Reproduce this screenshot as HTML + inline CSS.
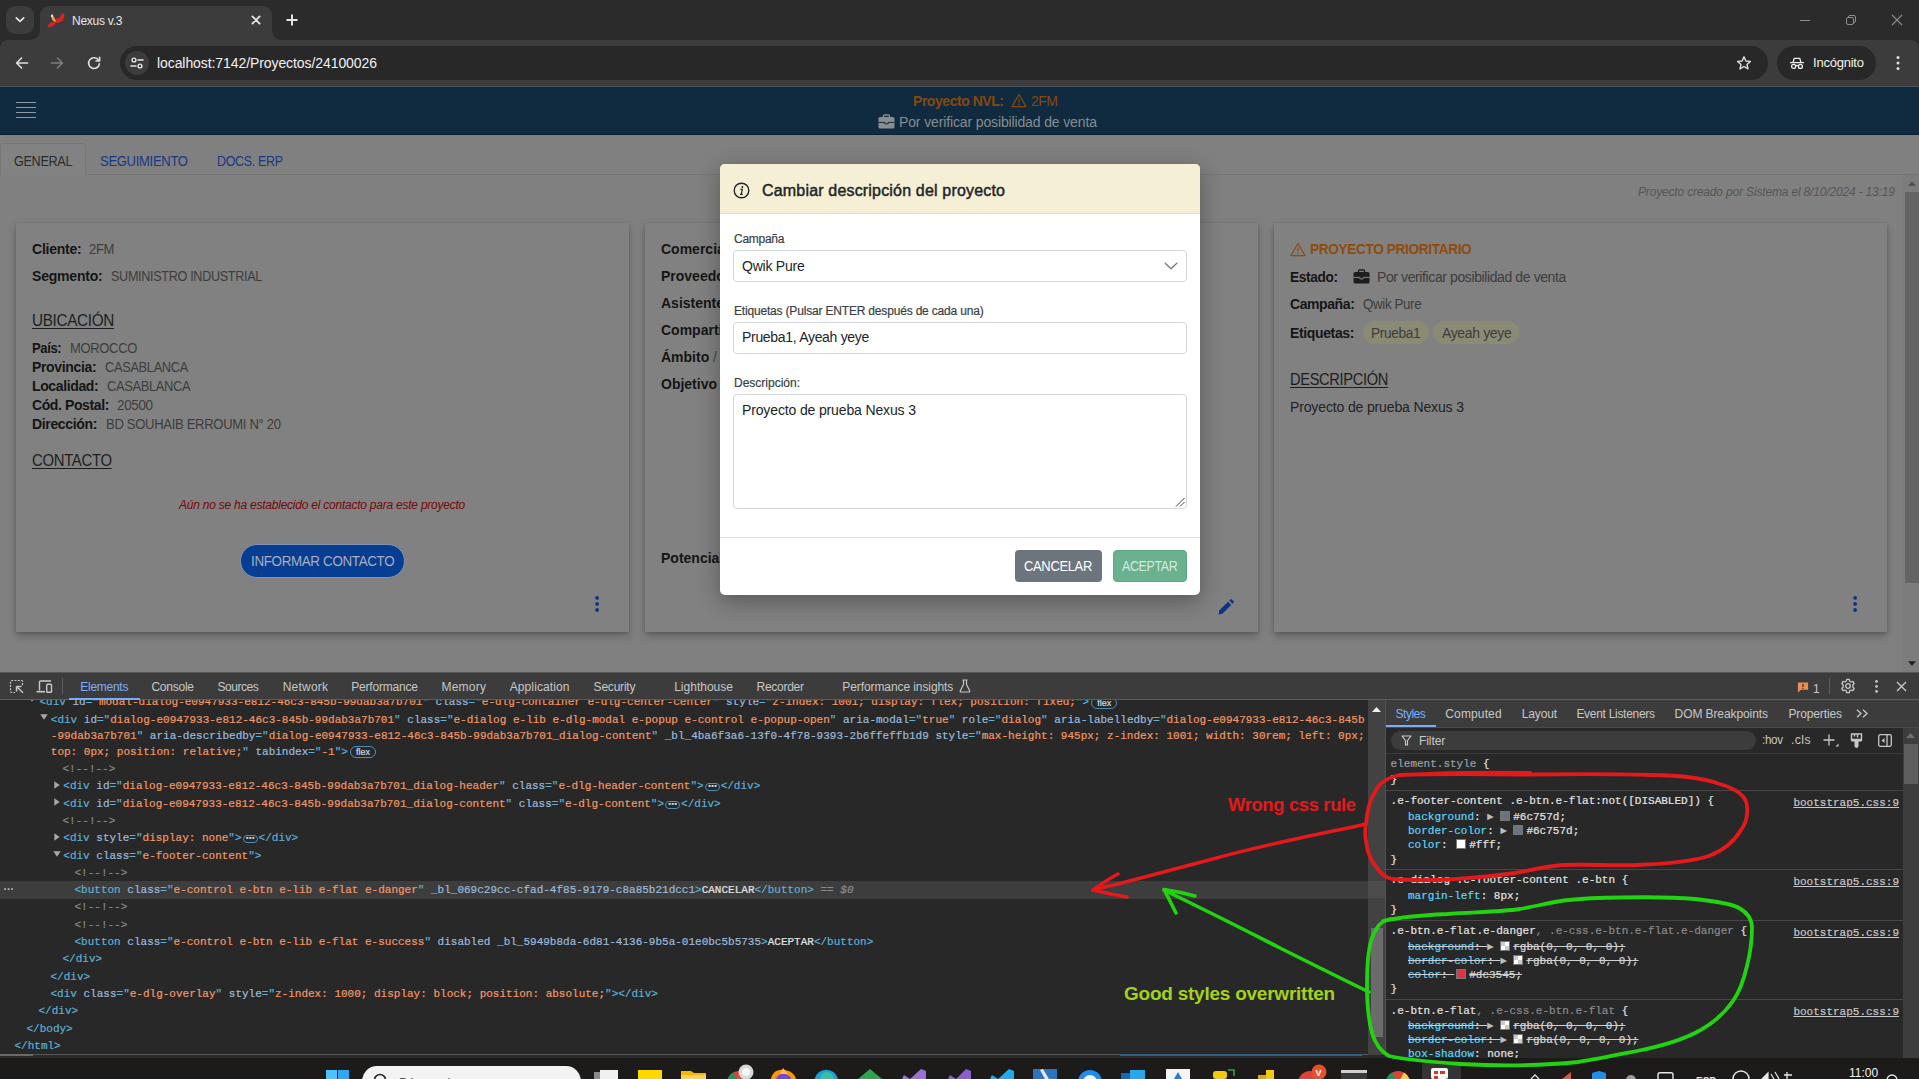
<!DOCTYPE html>
<html lang="es">
<head>
<meta charset="utf-8">
<title>Nexus v.3</title>
<style>
*{box-sizing:border-box;margin:0;padding:0}
html,body{width:1919px;height:1079px;overflow:hidden;background:#282828}
body{position:relative;font-family:"Liberation Sans",sans-serif;font-size:14px;color:#222;-webkit-font-smoothing:antialiased}
.a{position:absolute}
.t{position:absolute;white-space:nowrap;line-height:20px;height:20px;margin-top:-10px}
svg{position:absolute;overflow:visible}
b{font-weight:700}
/* ---------- browser chrome ---------- */
#tabstrip{left:0;top:0;width:1919px;height:40px;background:#2b2b2b}
#toolbar{left:0;top:40px;width:1919px;height:47px;background:#3c3c3c}
#tab{left:40px;top:6px;width:232px;height:34px;background:#3c3c3c;border-radius:9px 9px 0 0}
#tab:before,#tab:after{content:"";position:absolute;bottom:0;width:9px;height:9px}
#tab:before{left:-9px;background:radial-gradient(circle at 0 0,transparent 8.5px,#3c3c3c 9px)}
#tab:after{right:-9px;background:radial-gradient(circle at 100% 0,transparent 8.5px,#3c3c3c 9px)}
#tsb{left:6px;top:6px;width:28px;height:28px;border-radius:9px;background:#3c3c3c}
#url{left:120px;top:46px;width:1648px;height:34px;border-radius:17px;background:#282828}
#urlic{left:125px;top:51px;width:24px;height:24px;border-radius:12px;background:#3c3c3c}
#incog{left:1777px;top:46px;width:99px;height:34px;border-radius:17px;background:#282828}
/* ---------- app ---------- */
#apphead{left:0;top:87px;width:1919px;height:48px;background:#102b3f;border-bottom:1px solid #0c2232}
#page{left:0;top:135px;width:1919px;height:537px;background:#808080}
.card{position:absolute;top:223px;width:613px;height:409px;background:#818181;box-shadow:0 4px 8px rgba(0,0,0,.24),0 1px 3px rgba(0,0,0,.14)}
.lb{font-weight:700;color:#151515}
.vl{color:#3d3d3d}
.sec{color:#1e1e1e;font-size:16px;text-decoration:underline;text-underline-offset:2px}
/* ---------- dialog ---------- */
#dlg{left:720px;top:164px;width:480px;height:431px;background:#fff;border-radius:5px;box-shadow:0 6px 22px rgba(0,0,0,.32)}
#dlgh{left:0;top:0;width:480px;height:50px;background:#f5f0d5;border-radius:5px 5px 0 0;border-bottom:1px solid #e4dfc6}
.inp{position:absolute;left:13px;width:454px;border:1px solid #d3d6da;border-radius:4px;background:#fff}
.dl{font-size:12px;color:#3a3f44;-webkit-text-stroke:.2px #3a3f44}
.dv{font-size:14px;color:#212529}
.btn{position:absolute;height:32px;border-radius:4px;top:386px}
/* ---------- devtools ---------- */
#dt{left:0;top:672px;width:1919px;height:386px;background:#282828}
#dtbar{left:0;top:673px;width:1919px;height:27px;background:#3c3c3c;border-bottom:1px solid #5c5c5c}
.dtt{font-size:12px;color:#c7c7c7}
.m{font-family:"Liberation Mono",monospace;font-size:11px}
.row{position:absolute;-webkit-text-stroke:.2px;height:17.25px;line-height:17.25px;white-space:pre;font-family:"Liberation Mono",monospace;font-size:11px;color:#5db0d7}
.g{color:#5db0d7}.n{color:#9bbbdc}.v{color:#f29766}.c{color:#898989}.w{color:#e3e3e3}
.fx{display:inline-block;font-family:"Liberation Sans",sans-serif;font-size:9px;line-height:10px;height:12px;padding:0 5px;border:1px solid #4b8fb5;border-radius:7px;color:#c7dff0;margin-left:2px;vertical-align:baseline;position:relative;top:.5px}
.el{display:inline-block;font-family:"DejaVu Sans",sans-serif;font-weight:700;font-size:9px;line-height:5px;height:8px;width:15px;text-align:center;border:1px solid #4b8fb5;border-radius:4px;color:#d5e6f2;margin:0 1px;vertical-align:baseline;position:relative;top:0}
.sw{display:inline-block;width:10px;height:10px;margin:0 3px 0 2px;vertical-align:baseline;position:relative;top:1px;border:1px solid #757575}
.ar{display:inline-block;font-size:8px;line-height:8px;height:8px;color:#bdbdbd;width:11px;vertical-align:baseline;position:relative;top:-1px;font-family:"DejaVu Sans",sans-serif}
#task{left:0;top:1058px;width:1919px;height:21px;background:#1c1b1a}
</style>
</head>
<body>
<!-- ======= browser chrome ======= -->
<div class="a" id="tabstrip"></div>
<div class="a" id="toolbar"></div>
<div class="a" id="tsb"></div>
<div class="a" id="tab"></div>
<div class="a" id="url"></div>
<div class="a" id="urlic"></div>
<div class="a" id="incog"></div>

<svg style="left:14px;top:14px" width="12" height="12" viewBox="0 0 12 12"><path d="M2.3 3.8 6 7.4 9.7 3.8" fill="none" stroke="#e8e8e8" stroke-width="1.7" stroke-linecap="round" stroke-linejoin="round"/></svg>
<svg style="left:47px;top:12px" width="18" height="16" viewBox="0 0 18 16"><path d="M.8 14.500 2 12 6 10 8 8.500 10 6.500 13 5.500 14.500 2.500 16.500 1.500 17.300 4 16 7 15 9 11 10.500 8.500 10.500 7 13 4 14.500 1.500 15.500Z" fill="#d3262a" stroke="#d3262a" stroke-width=".6" stroke-linejoin="round"/><path d="M4 4 6 3.500 7.500 6 9.200 9.400 7.500 10 5 7.500Z" fill="#eda13f"/><rect x="4" y="2.400" width="2.100" height="2.600" rx=".6" fill="#e8dccb"/><path d="M6.400 8.800 8.600 10.200 7.400 10.800Z" fill="#a81a12"/></svg>
<div class="t" id="tt" style="left:72px;top:21px;font-size:12px;color:#e6e6e6;letter-spacing:-0.246px">Nexus v.3</div>
<svg style="left:251px;top:15px" width="10" height="10" viewBox="0 0 10 10"><path d="M1.4 1.4 8.600 8.600M8.600 1.400 1.400 8.600" stroke="#e3e3e3" stroke-width="1.9" stroke-linecap="round"/></svg>
<svg style="left:286px;top:14px" width="12" height="12" viewBox="0 0 12 12"><path d="M6 1.200V10.800M1.200 6H10.800" stroke="#e3e3e3" stroke-width="2" stroke-linecap="round"/></svg>
<svg style="left:1799px;top:14px" width="12" height="12" viewBox="0 0 12 12"><path d="M1 6.5H11" stroke="#8e8e8e" stroke-width="1"/></svg>
<svg style="left:1845px;top:14px" width="12" height="12" viewBox="0 0 12 12"><rect x="1.5" y="3.5" width="7" height="7" rx="1.5" fill="none" stroke="#8e8e8e"/><path d="M3.5 3.5V3A1.5 1.5 0 0 1 5 1.5H9A1.5 1.5 0 0 1 10.5 3V7A1.5 1.5 0 0 1 9 8.5H8.5" fill="none" stroke="#8e8e8e"/></svg>
<svg style="left:1891px;top:14px" width="12" height="12" viewBox="0 0 12 12"><path d="M1 1 11 11M11 1 1 11" stroke="#8e8e8e" stroke-width="1.1"/></svg>
<svg style="left:15px;top:56px" width="14" height="14" viewBox="0 0 14 14"><path d="M12.6 7H2M6.6 2 1.6 7 6.6 12" fill="none" stroke="#e0e0e0" stroke-width="1.6" stroke-linecap="round" stroke-linejoin="round"/></svg>
<svg style="left:50px;top:56px" width="14" height="14" viewBox="0 0 14 14"><path d="M1.4 7H12M7.4 2 12.4 7 7.4 12" fill="none" stroke="#7d7d7d" stroke-width="1.6" stroke-linecap="round" stroke-linejoin="round"/></svg>
<svg style="left:87px;top:56px" width="14" height="14" viewBox="0 0 14 14"><path d="M11.6 4.2A5.4 5.4 0 1 0 12.4 7.8" fill="none" stroke="#e0e0e0" stroke-width="1.6" stroke-linecap="round"/><path d="M12.6 1.4V5H9" fill="none" stroke="#e0e0e0" stroke-width="1.6" stroke-linecap="round" stroke-linejoin="round"/></svg>
<svg style="left:130px;top:56px" width="14" height="14" viewBox="0 0 14 14"><circle cx="4" cy="4" r="1.9" fill="none" stroke="#e6e6e6" stroke-width="1.4"/><path d="M8 4H13" stroke="#e6e6e6" stroke-width="1.5" stroke-linecap="round"/><circle cx="10" cy="10" r="1.9" fill="none" stroke="#e6e6e6" stroke-width="1.4"/><path d="M1 10H6" stroke="#e6e6e6" stroke-width="1.5" stroke-linecap="round"/></svg>
<div class="t" id="tu" style="left:157px;top:63px;font-size:14px;color:#f1f1f1;letter-spacing:-0.082px">localhost:7142/Proyectos/24100026</div>
<svg style="left:1736px;top:55px" width="16" height="16" viewBox="0 0 16 16"><path d="M8 1.8 9.9 6 14.4 6.4 11 9.4 12 13.9 8 11.5 4 13.9 5 9.4 1.6 6.4 6.1 6Z" fill="none" stroke="#e0e0e0" stroke-width="1.4" stroke-linejoin="round"/></svg>
<svg style="left:1789px;top:55px" width="16" height="16" viewBox="0 0 16 16"><path d="M1.5 7.6H14.5" stroke="#eee" stroke-width="1.4" stroke-linecap="round"/><path d="M4.100 7.200 5.200 3.400H10.800L11.900 7.200" fill="none" stroke="#eee" stroke-width="1.300" stroke-linejoin="round"/><circle cx="4.6" cy="11.4" r="2" fill="none" stroke="#eee" stroke-width="1.3"/><circle cx="11.4" cy="11.4" r="2" fill="none" stroke="#eee" stroke-width="1.3"/><path d="M6.6 11C7.4 10.4 8.6 10.4 9.4 11" fill="none" stroke="#eee" stroke-width="1.2"/></svg>
<div class="t" id="ti" style="left:1813px;top:63px;font-size:13px;color:#f1f1f1;letter-spacing:-0.221px">Incógnito</div>
<svg style="left:1895px;top:55px" width="6" height="16" viewBox="0 0 6 16"><circle cx="3" cy="2.4" r="1.5" fill="#e0e0e0"/><circle cx="3" cy="8" r="1.5" fill="#e0e0e0"/><circle cx="3" cy="13.6" r="1.5" fill="#e0e0e0"/></svg>
<div class="a" style="left:0;top:40px;width:8px;height:8px;background:radial-gradient(circle at 100% 100%,#3c3c3c 7.500px,#2b2b2b 8px)"></div>
<div class="a" style="left:0;top:86px;width:1919px;height:1px;background:#4a545b"></div>
<div class="a" style="left:1911px;top:40px;width:8px;height:8px;background:radial-gradient(circle at 0 100%,#3c3c3c 7.500px,#2b2b2b 8px)"></div>
<!--CHROME-->
<!-- ======= app ======= -->
<div class="a" id="apphead"></div>
<div class="a" id="page"></div>

<div class="a" style="left:16px;top:102px;width:20px;height:1px;background:#8e98a2"></div><div class="a" style="left:16px;top:107px;width:20px;height:1px;background:#8e98a2"></div><div class="a" style="left:16px;top:112px;width:20px;height:1px;background:#8e98a2"></div><div class="a" style="left:16px;top:117px;width:20px;height:1px;background:#8e98a2"></div>
<div class="t" id="h1" style="left:913px;top:100.500px;font-weight:700;color:#86480e;letter-spacing:-0.456px">Proyecto NVL:</div>
<svg style="left:1011px;top:93px" width="16" height="15" viewBox="0 0 16 15"><path d="M8 1.3 15 13.6H1Z" fill="none" stroke="#86480e" stroke-width="1.2" stroke-linejoin="round"/><path d="M8 5.4V9.4" stroke="#86480e" stroke-width="1.2"/><circle cx="8" cy="11.4" r=".8" fill="#86480e"/></svg>
<div class="t" id="h2" style="left:1031px;top:100.500px;color:#86480e;letter-spacing:-0.500px">2FM</div>
<svg style="left:878px;top:114px" width="17" height="15" viewBox="0 0 17 15"><path d="M5.5 3.2V2A1 1 0 0 1 6.5 1H10.5A1 1 0 0 1 11.5 2V3.2" fill="none" stroke="#8b8d90" stroke-width="1.4"/><rect x=".5" y="3" width="16" height="11.5" rx="1.6" fill="#8b8d90"/><path d="M.5 8.4H6.8V9.8H10.2V8.4H16.5" fill="none" stroke="#102b3f" stroke-width="1"/></svg>
<div class="t" id="h3" style="left:899px;top:122px;color:#878c91;letter-spacing:-0.132px">Por verificar posibilidad de venta</div>

<div class="a" style="left:0;top:174px;width:1919px;height:1px;background:#767676"></div>
<div class="a" style="left:0;top:143px;width:86px;height:32px;background:#828282;border:1px solid #767676;border-bottom:0;border-radius:4px 4px 0 0"></div>
<div class="t" id="tb1" style="left:14px;top:161px;color:#2b2b2b;letter-spacing:-0.35px;transform:scaleX(0.9025);transform-origin:0 50%">GENERAL</div>
<div class="t" id="tb2" style="left:100px;top:161px;color:#173a85;letter-spacing:-0.35px;transform:scaleX(0.9335);transform-origin:0 50%">SEGUIMIENTO</div>
<div class="t" id="tb3" style="left:217px;top:161px;color:#173a85;letter-spacing:-0.35px;transform:scaleX(0.8893);transform-origin:0 50%">DOCS. ERP</div>
<div class="t" id="cr" style="left:1638px;top:192px;font-size:12px;font-style:italic;color:#565656;letter-spacing:-0.167px">Proyecto creado por Sistema el 8/10/2024 - 13:19</div>
<!-- page scrollbar -->
<div class="a" style="left:1903px;top:175px;width:16px;height:497px;background:#7c7c7c"></div>
<div class="a" style="left:1905px;top:192px;width:14px;height:391px;background:#646464"></div>
<svg style="left:1908px;top:181px" width="8" height="5" viewBox="0 0 8 5"><path d="M0 4.700 4 .3 8 4.700Z" fill="#4f4f4f"/></svg>
<svg style="left:1908px;top:661px" width="8" height="5" viewBox="0 0 8 5"><path d="M0 .3 4 4.700 8 .3Z" fill="#1e1e1e"/></svg>

<!-- card 1 -->
<div class="card" style="left:16px"></div>
<div class="t lb" id="c1a" style="left:32px;top:249px;letter-spacing:-0.235px">Cliente:</div><div class="t vl" id="c1b" style="left:89px;top:249px;letter-spacing:-0.35px;transform:scaleX(0.9304);transform-origin:0 50%">2FM</div>
<div class="t lb" id="c2a" style="left:32px;top:276px;letter-spacing:-0.205px">Segmento:</div><div class="t vl" id="c2b" style="left:111px;top:276px;letter-spacing:-0.35px;transform:scaleX(0.9005);transform-origin:0 50%">SUMINISTRO INDUSTRIAL</div>
<div class="t sec" id="s1" style="left:32px;top:321px;letter-spacing:-0.35px;transform:scaleX(0.9558);transform-origin:0 50%">UBICACIÓN</div>
<div class="t lb" id="c3a" style="left:32px;top:348px;letter-spacing:-0.35px;transform:scaleX(0.9261);transform-origin:0 50%">País:</div><div class="t vl" id="c3b" style="left:70px;top:348px;letter-spacing:-0.35px;transform:scaleX(0.9274);transform-origin:0 50%">MOROCCO</div>
<div class="t lb" id="c4a" style="left:32px;top:367px;letter-spacing:-0.334px">Provincia:</div><div class="t vl" id="c4b" style="left:105px;top:367px;letter-spacing:-0.35px;transform:scaleX(0.9153);transform-origin:0 50%">CASABLANCA</div>
<div class="t lb" id="c5a" style="left:32px;top:386px;letter-spacing:-0.368px">Localidad:</div><div class="t vl" id="c5b" style="left:107px;top:386px;letter-spacing:-0.35px;transform:scaleX(0.9186);transform-origin:0 50%">CASABLANCA</div>
<div class="t lb" id="c6a" style="left:32px;top:405px;letter-spacing:-0.397px">Cód. Postal:</div><div class="t vl" id="c6b" style="left:117px;top:405px;letter-spacing:-0.35px;transform:scaleX(0.9590);transform-origin:0 50%">20500</div>
<div class="t lb" id="c7a" style="left:32px;top:424px;letter-spacing:-0.352px">Dirección:</div><div class="t vl" id="c7b" style="left:106px;top:424px;letter-spacing:-0.35px;transform:scaleX(0.9340);transform-origin:0 50%">BD SOUHAIB ERROUMI N° 20</div>
<div class="t sec" id="s2" style="left:32px;top:461px;letter-spacing:-0.35px;transform:scaleX(0.9319);transform-origin:0 50%">CONTACTO</div>
<div class="t" id="er" style="left:179px;top:505px;font-size:12px;font-style:italic;color:#780709;letter-spacing:-0.233px">Aún no se ha establecido el contacto para este proyecto</div>
<div class="a" style="left:240px;top:544px;width:165px;height:34px;border-radius:17px;background:#083e92;border:1px solid #8292b2"></div>
<div class="t" id="bt" style="left:251px;top:561px;color:#a9aebb;letter-spacing:-0.35px;transform:scaleX(0.9560);transform-origin:0 50%">INFORMAR CONTACTO</div>
<svg style="left:594px;top:595px" width="6" height="18" viewBox="0 0 6 18"><circle cx="3.100" cy="2.900" r="1.900" fill="#0b3584"/><circle cx="3.100" cy="8.950" r="1.900" fill="#0b3584"/><circle cx="3.100" cy="15" r="1.900" fill="#0b3584"/></svg>

<!-- card 2 -->
<div class="card" style="left:645px"></div>
<div class="t lb" style="left:661px;top:249px">Comercial:</div>
<div class="t lb" style="left:661px;top:276px">Proveedor:</div>
<div class="t lb" style="left:661px;top:303px">Asistente:</div>
<div class="t lb" style="left:661px;top:330px">Compartido:</div>
<div class="t lb" style="left:661px;top:357px">Ámbito <span style="font-weight:400;color:#444">/</span></div>
<div class="t lb" style="left:661px;top:384px">Objetivo</div>
<div class="t lb" style="left:661px;top:558px">Potencial:</div>
<svg style="left:1217px;top:598px" width="18" height="18" viewBox="0 0 18 18"><path d="M2.2 12.6 11 3.8 14.2 7 5.4 15.8 1.6 16.4Z" fill="#0b3584"/><path d="M12.2 2.6 13.4 1.4A1 1 0 0 1 14.8 1.4L16.6 3.2A1 1 0 0 1 16.6 4.6L15.4 5.8Z" fill="#0b3584"/></svg>

<!-- card 3 -->
<div class="card" style="left:1274px"></div>
<svg style="left:1290px;top:242.300px" width="16" height="15" viewBox="0 0 16 15"><path d="M8 1.3 15 13.6H1Z" fill="none" stroke="#8f4c0c" stroke-width="1.2" stroke-linejoin="round"/><path d="M8 5.4V9.4" stroke="#8f4c0c" stroke-width="1.2"/><circle cx="8" cy="11.4" r=".8" fill="#8f4c0c"/></svg>
<div class="t" id="pp" style="left:1310px;top:249px;font-weight:700;color:#8f4c0c;letter-spacing:-0.35px;transform:scaleX(0.9723);transform-origin:0 50%">PROYECTO PRIORITARIO</div>
<div class="t lb" id="d1a" style="left:1290px;top:277px;letter-spacing:-0.35px;transform:scaleX(0.9747);transform-origin:0 50%">Estado:</div>
<svg style="left:1353px;top:269px" width="17" height="15" viewBox="0 0 17 15"><path d="M5.5 3.2V2A1 1 0 0 1 6.5 1H10.5A1 1 0 0 1 11.5 2V3.2" fill="none" stroke="#1d1d1d" stroke-width="1.4"/><rect x=".5" y="3" width="16" height="11.5" rx="1.6" fill="#1d1d1d"/><path d="M.5 8.4H6.8V9.8H10.2V8.4H16.5" fill="none" stroke="#858585" stroke-width="1"/></svg>
<div class="t vl" id="d1b" style="left:1377px;top:277px;letter-spacing:-0.395px">Por verificar posibilidad de venta</div>
<div class="t lb" id="d2a" style="left:1290px;top:304px;letter-spacing:-0.413px">Campaña:</div><div class="t vl" id="d2b" style="left:1363px;top:304px;letter-spacing:-0.35px;transform:scaleX(0.9486);transform-origin:0 50%">Qwik Pure</div>
<div class="t lb" id="d3a" style="left:1290px;top:333px;letter-spacing:-0.365px">Etiquetas:</div>
<div class="a" style="left:1363px;top:321px;width:66px;height:23px;border-radius:12px;background:#8b8a74"></div>
<div class="t vl" id="ch1" style="left:1371px;top:333px;letter-spacing:-0.35px;transform:scaleX(0.9776);transform-origin:0 50%">Prueba1</div>
<div class="a" style="left:1433px;top:321px;width:86px;height:23px;border-radius:12px;background:#8b8a74"></div>
<div class="t vl" id="ch2" style="left:1442px;top:333px;letter-spacing:-0.356px">Ayeah yeye</div>
<div class="t sec" id="s3" style="left:1290px;top:380px;letter-spacing:-0.35px;transform:scaleX(0.9143);transform-origin:0 50%">DESCRIPCIÓN</div>
<div class="t vl" id="d4" style="left:1290px;top:407px;color:#232323;letter-spacing:-0.138px">Proyecto de prueba Nexus 3</div>
<svg style="left:1852px;top:595px" width="6" height="18" viewBox="0 0 6 18"><circle cx="3.100" cy="2.900" r="1.900" fill="#0b3584"/><circle cx="3.100" cy="8.950" r="1.900" fill="#0b3584"/><circle cx="3.100" cy="15" r="1.900" fill="#0b3584"/></svg>
<!--APP-->

<div class="a" id="dlg">
<div class="a" id="dlgh"></div>
<svg style="left:12.500px;top:17.500px" width="17" height="17" viewBox="0 0 17 17"><circle cx="8.500" cy="8.500" r="7.300" fill="none" stroke="#212529" stroke-width="1.400"/><path d="M7.400 7.400H9.300L8.300 12.200M7 12.300H9.800" fill="none" stroke="#212529" stroke-width="1.200"/><circle cx="9.300" cy="4.900" r="1" fill="#212529"/></svg>
<div class="t" id="dt0" style="left:42px;top:27px;font-size:16px;font-weight:400;-webkit-text-stroke:.45px #212529;color:#212529;letter-spacing:0.179px">Cambiar descripción del proyecto</div>
<div class="t dl" id="l1" style="left:14px;top:75px;letter-spacing:-0.272px">Campaña</div>
<div class="inp" style="top:86px;height:32px"></div>
<div class="t dv" id="v1" style="left:22px;top:102px;letter-spacing:-0.235px">Qwik Pure</div>
<svg style="left:444px;top:98px" width="14" height="8" viewBox="0 0 14 8"><path d="M1.2 1.2 7 6.8 12.8 1.2" fill="none" stroke="#6c757d" stroke-width="1.2" stroke-linecap="round" stroke-linejoin="round"/></svg>
<div class="t dl" id="l2" style="left:14px;top:147px;letter-spacing:-0.181px">Etiquetas (Pulsar ENTER después de cada una)</div>
<div class="inp" style="top:158px;height:32px"></div>
<div class="t dv" id="v2" style="left:22px;top:173px;letter-spacing:-0.308px">Prueba1, Ayeah yeye</div>
<div class="t dl" id="l3" style="left:14px;top:219px;letter-spacing:-0.003px">Descripción:</div>
<div class="inp" style="top:230px;height:115px"></div>
<div class="t dv" id="v3" style="left:22px;top:246px;letter-spacing:-0.138px">Proyecto de prueba Nexus 3</div>
<svg style="left:455px;top:333px" width="10" height="10" viewBox="0 0 10 10"><path d="M1 9.5 9.5 1M5 9.5 9.5 5" stroke="#444" stroke-width="1"/></svg>
<div class="a" style="left:0;top:373px;width:480px;height:1px;background:#dee2e6"></div>
<div class="btn" style="left:295px;width:87px;background:#6c757d"></div>
<div class="t" id="b1" style="left:304px;top:402px;color:#fff;letter-spacing:-0.35px;transform:scaleX(0.9255);transform-origin:0 50%">CANCELAR</div>
<div class="btn" style="left:393px;width:74px;background:#6ab190;border:1px solid #5ea886"></div>
<div class="t" id="b2" style="left:402px;top:402px;color:#d4ebe0;letter-spacing:-0.35px;transform:scaleX(0.8826);transform-origin:0 50%">ACEPTAR</div>
</div>
<!--DIALOG-->
<!-- ======= devtools ======= -->
<div class="a" id="dt"></div>
<div class="a" id="dtbar"></div>

<div class="a" style="left:0;top:672px;width:1919px;height:1px;background:#555"></div>
<svg style="left:9px;top:679px" width="16" height="16" viewBox="0 0 16 16"><path d="M13.5 6V2.5A1 1 0 0 0 12.500 1.5H2.5A1 1 0 0 0 1.500 2.5V12.5A1 1 0 0 0 2.500 13.5H6" fill="none" stroke="#c7c7c7" stroke-width="1.2" stroke-dasharray="2 1.3"/><path d="M7.5 7.500 14 13.800M7.5 7.500V12.600M7.5 7.500H12.600" fill="none" stroke="#c7c7c7" stroke-width="1.500"/></svg>
<svg style="left:36px;top:679px" width="17" height="16" viewBox="0 0 17 16"><path d="M3.500 11.500V3A1 1 0 0 1 4.500 2H15" fill="none" stroke="#c7c7c7" stroke-width="1.4"/><path d="M.5 12.700H9" stroke="#c7c7c7" stroke-width="1.600"/><rect x="10.700" y="5.200" width="4.800" height="8" rx=".8" fill="none" stroke="#c7c7c7" stroke-width="1.400"/></svg>
<div class="a" style="left:62px;top:678px;width:1px;height:16px;background:#5c5c5c"></div>
<div class="a" style="left:69px;top:698px;width:71px;height:2px;background:#7cacf8;border-radius:1px 1px 0 0"></div>
<div class="t dtt" id="dv0" style="left:80.3px;top:687.200px;color:#7cacf8;letter-spacing:-0.276px">Elements</div><div class="t dtt" id="dv1" style="left:151.4px;top:687.200px;color:#c7c7c7;letter-spacing:-0.239px">Console</div><div class="t dtt" id="dv2" style="left:217.4px;top:687.200px;color:#c7c7c7;letter-spacing:-0.455px">Sources</div><div class="t dtt" id="dv3" style="left:282.7px;top:687.200px;color:#c7c7c7;letter-spacing:0.214px">Network</div><div class="t dtt" id="dv4" style="left:351.3px;top:687.200px;color:#c7c7c7;letter-spacing:-0.200px">Performance</div><div class="t dtt" id="dv5" style="left:441.4px;top:687.200px;color:#c7c7c7;letter-spacing:0.251px">Memory</div><div class="t dtt" id="dv6" style="left:509.7px;top:687.200px;color:#c7c7c7;letter-spacing:0.108px">Application</div><div class="t dtt" id="dv7" style="left:593.6px;top:687.200px;color:#c7c7c7;letter-spacing:-0.208px">Security</div><div class="t dtt" id="dv8" style="left:674.2px;top:687.200px;color:#c7c7c7;letter-spacing:0.009px">Lighthouse</div><div class="t dtt" id="dv9" style="left:756.6px;top:687.200px;color:#c7c7c7;letter-spacing:-0.280px">Recorder</div><div class="t dtt" id="dv10" style="left:842.3px;top:687.200px;color:#c7c7c7;letter-spacing:-0.090px">Performance insights</div>
<svg style="left:959px;top:679px" width="12" height="14" viewBox="0 0 12 14"><path d="M3.500 1H8.500M4.500 1V5.500L1.200 12A.8 .8 0 0 0 2 13H10A.8 .8 0 0 0 10.800 12L7.500 5.500V1" fill="none" stroke="#c7c7c7" stroke-width="1.200" stroke-linejoin="round"/></svg>
<svg style="left:1796.500px;top:681px" width="12" height="12" viewBox="0 0 13 13"><path d="M1 1.500H12V9.500H4.500L1 12.500Z" fill="#f28b4e"/><path d="M6.500 3V6.400" stroke="#3c3c3c" stroke-width="1.500"/><circle cx="6.500" cy="8" r=".8" fill="#3c3c3c"/></svg>
<div class="t dtt" style="left:1813px;top:688.500px">1</div>
<div class="a" style="left:1829px;top:678px;width:1px;height:16px;background:#5c5c5c"></div>
<svg style="left:1840px;top:678px" width="16" height="16" viewBox="0 0 16 16"><circle cx="8" cy="8" r="2.300" fill="none" stroke="#c7c7c7" stroke-width="1.300"/><path d="M6.700 1.300H9.300L9.700 3.200 11.100 4 12.900 3.300 14.200 5.600 12.800 6.900V9.100L14.200 10.400 12.900 12.700 11.100 12 9.700 12.800 9.300 14.700H6.700L6.300 12.800 4.900 12 3.100 12.700 1.800 10.400 3.200 9.100V6.900L1.800 5.600 3.100 3.300 4.900 4 6.300 3.200Z" fill="none" stroke="#c7c7c7" stroke-width="1.300" stroke-linejoin="round"/></svg>
<svg style="left:1873.500px;top:679px" width="5" height="15" viewBox="0 0 5 15"><circle cx="2.500" cy="2.400" r="1.400" fill="#c7c7c7"/><circle cx="2.500" cy="7.400" r="1.400" fill="#c7c7c7"/><circle cx="2.500" cy="12.400" r="1.400" fill="#c7c7c7"/></svg>
<svg style="left:1896px;top:681px" width="11" height="11" viewBox="0 0 11 11"><path d="M1 1 10 10M10 1 1 10" stroke="#c7c7c7" stroke-width="1.400"/></svg>
<!-- elements tree -->
<div class="a" style="left:0;top:700px;width:1368px;height:353px;overflow:hidden">
<div class="a" style="left:0;top:181.300px;width:1368px;height:17.300px;background:#3d3d3d"></div>
</div>
<div class="a" id="tree" style="left:0;top:700px;width:1368px;height:353px;overflow:hidden"><div class="a" style="left:0;top:-700px;width:1368px;height:1079px">
<div class="row" style="top:694.2px;left:39.5px"><span class="g">&lt;div</span> <span class="n">id</span><span class="g">="</span><span class="v">modal-dialog-e0947933-e812-46c3-845b-99dab3a7b701</span><span class="g">"</span> <span class="n">class</span><span class="g">="</span><span class="v">e-dlg-container e-dlg-center-center</span><span class="g">"</span> <span class="n">style</span><span class="g">="</span><span class="v">z-index: 1001; display: flex; position: fixed;</span><span class="g">"</span><span class="g">&gt;</span><span class="fx">flex</span></div>
<div class="row" style="top:711.7px;left:50.8px"><span class="g">&lt;div</span> <span class="n">id</span><span class="g">="</span><span class="v">dialog-e0947933-e812-46c3-845b-99dab3a7b701</span><span class="g">"</span> <span class="n">class</span><span class="g">="</span><span class="v">e-dialog e-lib e-dlg-modal e-popup e-control e-popup-open</span><span class="g">"</span> <span class="n">aria-modal</span><span class="g">="</span><span class="v">true</span><span class="g">"</span> <span class="n">role</span><span class="g">="</span><span class="v">dialog</span><span class="g">"</span> <span class="n">aria-labelledby</span><span class="g">="</span><span class="v">dialog-e0947933-e812-46c3-845b</span></div>
<div class="row" style="top:727.9px;left:50.8px"><span class="v">-99dab3a7b701</span><span class="g">"</span> <span class="n">aria-describedby</span><span class="g">="</span><span class="v">dialog-e0947933-e812-46c3-845b-99dab3a7b701_dialog-content</span><span class="g">"</span> <span class="n">_bl_4ba6f3a6-13f0-4f78-9393-2b6ffeffb1d9</span> <span class="n">style</span><span class="g">="</span><span class="v">max-height: 945px; z-index: 1001; width: 30rem; left: 0px;</span></div>
<div class="row" style="top:743.7px;left:50.8px"><span class="v">top: 0px; position: relative;</span><span class="g">"</span> <span class="n">tabindex</span><span class="g">="</span><span class="v">-1</span><span class="g">"</span><span class="g">&gt;</span><span class="fx">flex</span></div>
<div class="row" style="top:760.7px;left:62.5px"><span class="c">&lt;!--!--&gt;</span></div>
<div class="row" style="top:778.4px;left:63.3px"><span class="g">&lt;div</span> <span class="n">id</span><span class="g">="</span><span class="v">dialog-e0947933-e812-46c3-845b-99dab3a7b701_dialog-header</span><span class="g">"</span> <span class="n">class</span><span class="g">="</span><span class="v">e-dlg-header-content</span><span class="g">"</span><span class="g">&gt;</span><span class="el">&#8943;</span><span class="g">&lt;/div&gt;</span></div>
<div class="row" style="top:795.7px;left:63.3px"><span class="g">&lt;div</span> <span class="n">id</span><span class="g">="</span><span class="v">dialog-e0947933-e812-46c3-845b-99dab3a7b701_dialog-content</span><span class="g">"</span> <span class="n">class</span><span class="g">="</span><span class="v">e-dlg-content</span><span class="g">"</span><span class="g">&gt;</span><span class="el">&#8943;</span><span class="g">&lt;/div&gt;</span></div>
<div class="row" style="top:813.0px;left:62.5px"><span class="c">&lt;!--!--&gt;</span></div>
<div class="row" style="top:830.3px;left:63.3px"><span class="g">&lt;div</span> <span class="n">style</span><span class="g">="</span><span class="v">display: none</span><span class="g">"</span><span class="g">&gt;</span><span class="el">&#8943;</span><span class="g">&lt;/div&gt;</span></div>
<div class="row" style="top:847.6px;left:63.3px"><span class="g">&lt;div</span> <span class="n">class</span><span class="g">="</span><span class="v">e-footer-content</span><span class="g">"</span><span class="g">&gt;</span></div>
<div class="row" style="top:864.9px;left:74.5px"><span class="c">&lt;!--!--&gt;</span></div>
<div class="row" style="top:882.1px;left:74.5px"><span class="g">&lt;button</span> <span class="n">class</span><span class="g">="</span><span class="v">e-control e-btn e-lib e-flat e-danger</span><span class="g">"</span> <span class="n">_bl_069c29cc-cfad-4f85-9179-c8a85b21dcc1</span><span class="g">&gt;</span><span class="w">CANCELAR</span><span class="g">&lt;/button&gt;</span><span class="c"> == </span><span class="c" style="font-style:italic">$0</span></div>
<div class="row" style="top:899.4px;left:74.5px"><span class="c">&lt;!--!--&gt;</span></div>
<div class="row" style="top:916.7px;left:74.5px"><span class="c">&lt;!--!--&gt;</span></div>
<div class="row" style="top:934.0px;left:74.5px"><span class="g">&lt;button</span> <span class="n">class</span><span class="g">="</span><span class="v">e-control e-btn e-lib e-flat e-success</span><span class="g">"</span> <span class="n">disabled</span> <span class="n">_bl_5949b8da-6d81-4136-9b5a-01e0bc5b5735</span><span class="g">&gt;</span><span class="w">ACEPTAR</span><span class="g">&lt;/button&gt;</span></div>
<div class="row" style="top:951.3px;left:62.5px"><span class="g">&lt;/div&gt;</span></div>
<div class="row" style="top:968.6px;left:50.5px"><span class="g">&lt;/div&gt;</span></div>
<div class="row" style="top:985.9px;left:50.5px"><span class="g">&lt;div</span> <span class="n">class</span><span class="g">="</span><span class="v">e-dlg-overlay</span><span class="g">"</span> <span class="n">style</span><span class="g">="</span><span class="v">z-index: 1000; display: block; position: absolute;</span><span class="g">"</span><span class="g">&gt;&lt;/div&gt;</span></div>
<div class="row" style="top:1003.2px;left:38.5px"><span class="g">&lt;/div&gt;</span></div>
<div class="row" style="top:1020.5px;left:26.5px"><span class="g">&lt;/body&gt;</span></div>
<div class="row" style="top:1037.7px;left:14.5px"><span class="g">&lt;/html&gt;</span></div><svg style="left:40.0px;top:714.0px" width="8" height="6" viewBox="0 0 8 6"><path d="M.3 .3H7.7L4 5.7Z" fill="#a8a8a8"/></svg><svg style="left:53.7px;top:781.0px" width="6" height="8" viewBox="0 0 6 8"><path d="M.3 .3 5.7 4 .3 7.7Z" fill="#a8a8a8"/></svg><svg style="left:53.7px;top:798.3px" width="6" height="8" viewBox="0 0 6 8"><path d="M.3 .3 5.7 4 .3 7.7Z" fill="#a8a8a8"/></svg><svg style="left:53.7px;top:832.9px" width="6" height="8" viewBox="0 0 6 8"><path d="M.3 .3 5.7 4 .3 7.7Z" fill="#a8a8a8"/></svg><svg style="left:52.5px;top:850.7px" width="8" height="6" viewBox="0 0 8 6"><path d="M.3 .3H7.7L4 5.7Z" fill="#a8a8a8"/></svg><svg style="left:28.0px;top:696.0px" width="8" height="6" viewBox="0 0 8 6"><path d="M.3 .3H7.7L4 5.7Z" fill="#a8a8a8"/></svg>
<div class="t" style="left:3px;top:886px;font-size:11px;color:#bbb;letter-spacing:.5px;font-weight:700">&#8230;</div>
</div></div>
<!-- tree scrollbar -->
<div class="a" style="left:1368px;top:700px;width:17px;height:355px;background:#424242"></div>
<svg style="left:1372px;top:707px" width="9" height="5" viewBox="0 0 9 5"><path d="M0 5 4.500 0 9 5Z" fill="#f0f0f0"/></svg>
<div class="a" style="left:1368px;top:881px;width:17px;height:17px;background:#4c4c4c"></div>
<div class="a" style="left:1371px;top:928px;width:12px;height:109px;background:#6b6b6b"></div>
<div class="a" style="left:1385px;top:700px;width:1px;height:357px;background:#505050"></div>
<!-- bottom h-scrollbar sliver -->
<div class="a" style="left:0;top:1054px;width:1368px;height:1px;background:#575757"></div>
<div class="a" style="left:0;top:1055px;width:1368px;height:3px;background:#2c2c2c"></div>
<div class="a" style="left:1120px;top:1054px;width:242px;height:2px;background:#2d5f86"></div>
<div class="a" style="left:0;top:1054px;width:33px;height:2px;background:#6a6a6a"></div>
<!-- styles pane -->
<div class="a" style="left:1386px;top:700px;width:533px;height:28px;background:#3c3c3c"></div>
<div class="t dtt" id="sv0" style="left:1395.5px;top:714px;color:#7cacf8;letter-spacing:-0.477px">Styles</div>
<div class="t dtt" id="sv1" style="left:1445.3px;top:714px;color:#c7c7c7;letter-spacing:0.132px">Computed</div>
<div class="t dtt" id="sv2" style="left:1521.7px;top:714px;color:#c7c7c7;letter-spacing:-0.106px">Layout</div>
<div class="t dtt" id="sv3" style="left:1576.4px;top:714px;color:#c7c7c7;letter-spacing:-0.294px">Event Listeners</div>
<div class="t dtt" id="sv4" style="left:1674.6px;top:714px;color:#c7c7c7;letter-spacing:-0.093px">DOM Breakpoints</div>
<div class="t dtt" id="sv5" style="left:1788.5px;top:714px;color:#c7c7c7;letter-spacing:-0.134px">Properties</div>
<svg style="left:1856px;top:709px" width="12" height="9" viewBox="0 0 12 9"><path d="M1 .8 5 4.500 1 8.200M7 .8 11 4.500 7 8.200" fill="none" stroke="#c7c7c7" stroke-width="1.300"/></svg>
<div class="a" style="left:1386px;top:725px;width:50px;height:2px;background:#7cacf8"></div>
<div class="a" style="left:1386px;top:727px;width:533px;height:1px;background:#4a4a4a"></div>
<div class="a" style="left:1391px;top:731px;width:365px;height:19px;border-radius:10px;background:#3c3c3c"></div>
<svg style="left:1401px;top:735px" width="11" height="11" viewBox="0 0 11 11"><path d="M1 1H10L6.500 5.500V10H4.500V5.500Z" fill="none" stroke="#c7c7c7" stroke-width="1.200" stroke-linejoin="round"/></svg>
<div class="t dtt" id="fl" style="left:1419px;top:741px;letter-spacing:-0.074px">Filter</div>
<div class="t dtt" id="hv" style="left:1762px;top:740px;letter-spacing:-0.35px;transform:scaleX(0.9705);transform-origin:0 50%">:hov</div>
<div class="t dtt" id="cl" style="left:1791px;top:740px;letter-spacing:0.35px;transform:scaleX(1.0289);transform-origin:0 50%">.cls</div>
<svg style="left:1823px;top:734px" width="16" height="13" viewBox="0 0 16 13"><path d="M6 .5V11.500M.5 6H11.500" stroke="#c7c7c7" stroke-width="1.300"/><path d="M15.500 9.500V12.500H12.500Z" fill="#c7c7c7"/></svg>
<svg style="left:1850px;top:733px" width="13" height="15" viewBox="0 0 13 15"><path d="M1.500 1H11.500V6.500H1.500ZM4.500 1V3.500M7.500 1V4.500" fill="none" stroke="#c7c7c7" stroke-width="1.400"/><path d="M1.500 6.500V8H5V13A1.300 1.300 0 0 0 8 13V8H11.500V6.500" fill="#c7c7c7" stroke="#c7c7c7" stroke-width="1"/></svg>
<svg style="left:1878px;top:734px" width="14" height="13" viewBox="0 0 14 13"><rect x=".7" y=".7" width="12.600" height="11.600" rx="1.500" fill="none" stroke="#c7c7c7" stroke-width="1.300"/><path d="M9 .7V12.300" stroke="#c7c7c7" stroke-width="1.300"/><path d="M6.500 4 3.500 6.500 6.500 9Z" fill="#c7c7c7"/></svg>
<div class="a" style="left:1386px;top:753px;width:517px;height:1px;background:#3a3a3a"></div>
<div class="a" style="left:1903px;top:728px;width:16px;height:330px;background:#3d3d3d"></div>
<div class="a" style="left:1904px;top:744px;width:14px;height:40px;background:#5e5e5e"></div>
<svg style="left:1906px;top:733px" width="9" height="5" viewBox="0 0 9 5"><path d="M0 5 4.500 0 9 5Z" fill="#6e6e6e"/></svg>
<div class="row" style="top:755.7px;left:1390.6px;color:#e3e3e3"><span style="color:#9aa0a6">element.style</span> {</div>
<div class="row" style="top:772.4px;left:1390.6px;color:#e3e3e3">}</div>
<div class="a" style="left:1386px;top:790px;width:517px;height:1px;background:#474747"></div>
<div class="row" style="top:793.4px;left:1390.6px;color:#e3e3e3">.e-footer-content .e-btn.e-flat:not([DISABLED]) {</div>
<div class="row" style="top:794.7px;left:1793.4px;color:#c7c7c7;text-decoration:underline">bootstrap5.css:9</div>
<div class="row" style="top:808.7px;left:1408.0px;color:#e3e3e3"><span style="color:#5cd5fb">background</span>: <span class="ar">&#9654;</span><span class="sw" style="background:#6c757d"></span>#6c757d;</div>
<div class="row" style="top:823.0px;left:1408.0px;color:#e3e3e3"><span style="color:#5cd5fb">border-color</span>: <span class="ar">&#9654;</span><span class="sw" style="background:#6c757d"></span>#6c757d;</div>
<div class="row" style="top:837.2px;left:1408.0px;color:#e3e3e3"><span style="color:#5cd5fb">color</span>: <span class="sw" style="background:#fff"></span>#fff;</div>
<div class="row" style="top:851.7px;left:1390.6px;color:#e3e3e3">}</div>
<div class="a" style="left:1386px;top:869px;width:517px;height:1px;background:#474747"></div>
<div class="row" style="top:871.7px;left:1390.6px;color:#e3e3e3">.e-dialog .e-footer-content .e-btn {</div>
<div class="row" style="top:874.2px;left:1793.4px;color:#c7c7c7;text-decoration:underline">bootstrap5.css:9</div>
<div class="row" style="top:888.3px;left:1408.0px;color:#e3e3e3"><span style="color:#5cd5fb">margin-left</span>: 8px;</div>
<div class="row" style="top:902.2px;left:1390.6px;color:#e3e3e3">}</div>
<div class="a" style="left:1386px;top:920px;width:517px;height:1px;background:#474747"></div>
<div class="row" style="top:923.3px;left:1390.6px;color:#e3e3e3">.e-btn.e-flat.e-danger<span style="color:#8a8a8a">, .e-css.e-btn.e-flat.e-danger</span> {</div>
<div class="row" style="top:924.7px;left:1793.4px;color:#c7c7c7;text-decoration:underline">bootstrap5.css:9</div>
<div class="row" style="top:939.0px;left:1408.0px;color:#e3e3e3;text-decoration:line-through;text-decoration-color:#cfcfcf"><span style="color:#5cd5fb">background</span>: <span class="ar">&#9654;</span><span class="sw" style="background:conic-gradient(#fff 25%,#ccc 0 50%,#fff 0 75%,#ccc 0)"></span><span style="color:#d8d8d8">rgba(0, 0, 0, 0);</span></div>
<div class="row" style="top:953.0px;left:1408.0px;color:#e3e3e3;text-decoration:line-through;text-decoration-color:#cfcfcf"><span style="color:#5cd5fb">border-color</span>: <span class="ar">&#9654;</span><span class="sw" style="background:conic-gradient(#fff 25%,#ccc 0 50%,#fff 0 75%,#ccc 0)"></span><span style="color:#d8d8d8">rgba(0, 0, 0, 0);</span></div>
<div class="row" style="top:967.0px;left:1408.0px;color:#e3e3e3;text-decoration:line-through;text-decoration-color:#cfcfcf"><span style="color:#5cd5fb">color</span>: <span class="sw" style="background:#dc3545"></span><span style="color:#d8d8d8">#dc3545;</span></div>
<div class="row" style="top:981.3px;left:1390.6px;color:#e3e3e3">}</div>
<div class="a" style="left:1386px;top:999px;width:517px;height:1px;background:#474747"></div>
<div class="row" style="top:1002.5px;left:1390.6px;color:#e3e3e3">.e-btn.e-flat<span style="color:#8a8a8a">, .e-css.e-btn.e-flat</span> {</div>
<div class="row" style="top:1003.7px;left:1793.4px;color:#c7c7c7;text-decoration:underline">bootstrap5.css:9</div>
<div class="row" style="top:1017.7px;left:1408.0px;color:#e3e3e3;text-decoration:line-through;text-decoration-color:#cfcfcf"><span style="color:#5cd5fb">background</span>: <span class="ar">&#9654;</span><span class="sw" style="background:conic-gradient(#fff 25%,#ccc 0 50%,#fff 0 75%,#ccc 0)"></span><span style="color:#d8d8d8">rgba(0, 0, 0, 0);</span></div>
<div class="row" style="top:1031.9px;left:1408.0px;color:#e3e3e3;text-decoration:line-through;text-decoration-color:#cfcfcf"><span style="color:#5cd5fb">border-color</span>: <span class="ar">&#9654;</span><span class="sw" style="background:conic-gradient(#fff 25%,#ccc 0 50%,#fff 0 75%,#ccc 0)"></span><span style="color:#d8d8d8">rgba(0, 0, 0, 0);</span></div>
<div class="row" style="top:1046.0px;left:1408.0px;color:#e3e3e3"><span style="color:#5cd5fb">box-shadow</span>: none;</div>
<!--DEVTOOLS-->
<div class="a" id="task"></div>

<svg style="left:0;top:1058px" width="1919" height="21" viewBox="0 1058 1919 21">
<rect x="326" y="1070" width="11" height="9" fill="#4cc2ff"/><rect x="338" y="1070" width="11" height="9" fill="#2fa8f0"/>
<rect x="362" y="1066" width="219" height="30" rx="15" fill="#f3f3f3"/>
<circle cx="380" cy="1080" r="5.500" fill="none" stroke="#222" stroke-width="1.600"/>
<rect x="594" y="1072" width="16" height="7" fill="#8a8a8a"/><rect x="600" y="1070" width="18" height="9" fill="#f0f0f0"/>
<rect x="638" y="1070" width="24" height="9" fill="#ffd800"/>
<path d="M681 1079V1071H691L694 1073H706V1079Z" fill="#f7b500"/><rect x="681" y="1075" width="25" height="4" fill="#ffd15c"/>
<circle cx="739" cy="1083" r="12" fill="#db4437"/><path d="M727 1083A12 12 0 0 1 733 1072.600L739 1083Z" fill="#0f9d58"/><circle cx="746" cy="1072" r="7.500" fill="#d8d8d8"/><circle cx="746" cy="1072" r="4" fill="#f6f6f6"/>
<path d="M771 1079C772 1073 777 1069 783 1070C790 1070 795 1074 796 1079Z" fill="#ff9500"/><path d="M776 1079C777 1075 781 1073 785 1074C789 1075 791 1077 791 1079Z" fill="#7542e5"/><path d="M783 1068 788 1074 780 1074Z" fill="#ffbd4f"/>
<path d="M814.600 1079A12 12 0 0 1 838 1079Z" fill="#1b9de2"/><path d="M820 1079A7 7 0 0 1 834 1079Z" fill="#35c1a0"/>
<path d="M858 1079 870 1069 882 1079Z" fill="#2ea44f"/>
<path d="M902 1079 904 1075 910 1079ZM910 1079 921 1069 926 1071V1079Z" fill="#9b6fd6"/>
<path d="M948 1079 950 1075 956 1079ZM956 1079 966 1069 971 1071V1079Z" fill="#8a5fd0"/>
<path d="M990 1079 992 1075 998 1079ZM998 1079 1009 1069 1014 1071V1079Z" fill="#23a8f2"/>
<rect x="1033" y="1069" width="24" height="10" fill="#2c73c0"/><path d="M1043 1069 1049 1079H1045L1040 1070Z" fill="#e8e8e8"/>
<circle cx="1090" cy="1082" r="12" fill="#1d8ef0"/><circle cx="1090" cy="1082" r="7" fill="#f2f2f2"/>
<rect x="1121" y="1073" width="14" height="6" fill="#0f6cbd"/><rect x="1130" y="1070" width="15" height="9" fill="#28a8ea"/>
<rect x="1166" y="1069" width="24" height="10" fill="#f4f4f4"/><path d="M1174 1079 1178 1072 1182 1079Z" fill="#1e7fd6"/>
<rect x="1213" y="1071" width="14" height="8" rx="3" fill="#f2c811"/><path d="M1228 1070H1234V1076" fill="none" stroke="#2ea44f" stroke-width="1.600"/>
<rect x="1266" y="1070" width="8" height="9" fill="#f2c811"/><rect x="1258" y="1075" width="8" height="4" fill="#e0a800"/>
<circle cx="1310" cy="1083" r="12" fill="#db4437"/><circle cx="1319" cy="1072" r="7.500" fill="#e8502a"/>
<rect x="1341" y="1070" width="26" height="9" fill="#3a3a3a"/><rect x="1341" y="1070" width="26" height="3" fill="#cfcfcf"/>
<circle cx="1398" cy="1083" r="12" fill="#db4437"/><path d="M1386 1083A12 12 0 0 1 1392 1072.600L1398 1083Z" fill="#0f9d58"/><path d="M1410 1083A12 12 0 0 0 1404 1072.600L1398 1083Z" fill="#ffcd40"/>
<rect x="1422" y="1062" width="39" height="30" rx="4" fill="#343434"/>
<rect x="1431" y="1068" width="17" height="11" rx="2" fill="#f4f4f4"/><rect x="1434" y="1071" width="4" height="3" fill="#d03a2b"/><rect x="1440" y="1071" width="5" height="3" fill="#d03a2b"/><rect x="1434" y="1076" width="4" height="3" fill="#d03a2b"/>
<path d="M1531 1079 1535 1075 1539 1079" fill="none" stroke="#ddd" stroke-width="1.300"/>
<path d="M1562 1079 1571 1072V1079Z" fill="#d8583a"/>
<path d="M1592 1073 1599 1071 1606 1073V1079H1592Z" fill="#1f8fe8"/>
<circle cx="1631" cy="1080" r="5" fill="#9a9a9a"/>
<rect x="1658" y="1072.700" width="15" height="10" rx="2" fill="none" stroke="#e6e6e6" stroke-width="1.400"/>
<path d="M1733 1079A8 8 0 0 1 1749 1079" fill="none" stroke="#e6e6e6" stroke-width="1.400"/>
<path d="M1762 1079 1768 1073V1079ZM1771 1074 1774 1079M1775 1072 1779 1079" stroke="#e6e6e6" stroke-width="1.200" fill="#e6e6e6"/>
<path d="M1784 1075H1792M1787 1072V1079" stroke="#e6e6e6" stroke-width="1.300"/>
<circle cx="1892" cy="1080" r="5" fill="none" stroke="#e6e6e6" stroke-width="1.300"/>
</svg>
<div class="t" style="left:399px;top:1083px;font-size:13px;color:#555">Búsqueda</div>
<div class="t" style="left:1315.500px;top:1073px;font-size:9px;color:#fff;font-weight:700">V</div>
<div class="t" style="left:1696px;top:1082px;font-size:10px;color:#e6e6e6;font-weight:700">ESP</div>
<div class="t" id="clk" style="left:1849px;top:1073px;font-size:12px;color:#f0f0f0">11:00</div>
<!--TASK-->

<svg style="left:0;top:0" width="1919" height="1079" viewBox="0 0 1919 1079" fill="none" stroke-linecap="round" stroke-linejoin="round">
<path d="M1400 775C1440 773.500 1490 774.500 1532 774.500C1575 774 1615 774 1651 775C1678 775.500 1702 777.500 1718 783.500C1738 789 1747 797 1747 807C1748 815 1746 823 1741 830C1734 842 1724 850 1709 856C1690 862 1664 864 1637 865C1612 866 1588 864 1564 865C1545 866 1530 871 1511 873.500C1480 878 1430 882 1392 879C1384 877 1380 873 1377 868C1370 860 1367 851 1366 841C1365 835 1365 829 1366 824C1367 812 1369 801 1375 792C1378 785 1385 778 1400 775C1440 773 1490 772 1530 773" stroke="#e3191c" stroke-width="3.800"/>
<path d="M1366 824C1345 829 1322 833 1300 838C1268 845 1238 852 1209 860C1178 868 1148 876 1118 884C1108 886 1100 888 1093 890" stroke="#e3191c" stroke-width="3.600"/>
<path d="M1118 874C1108 879 1100 885 1093 890C1104 893 1116 895 1127 897" stroke="#e3191c" stroke-width="3.600"/>
<path d="M1369 992C1340 978 1310 963 1280 948C1245 930 1205 910 1164 890" stroke="#22d30f" stroke-width="3.600"/>
<path d="M1195 896C1184 893 1174 891 1164 889.500C1168 897 1172 905 1176 913" stroke="#22d30f" stroke-width="3.600"/>
<path d="M1383 921C1400 917 1425 915 1447 914C1475 912 1500 912 1520 909C1537 906 1548 903 1564 900.500C1585 898 1603 897.500 1622 897.500C1648 897 1672 897 1695 899C1714 901 1730 903 1739 908C1748 913 1752 920 1752 928C1752 941 1750 954 1747 966C1744 979 1740 991 1733 1001C1724 1014 1711 1025 1695 1033C1677 1042 1657 1047 1637 1051C1617 1055 1598 1059 1578 1062C1540 1066 1500 1066 1460 1064C1432 1062 1405 1060 1389 1056C1380 1051 1375 1043 1372 1033C1368 1018 1367 1002 1367 986C1367 974 1367 962 1369 951C1370 942 1373 934 1377 928C1379 924 1383 921 1390 919" stroke="#22d30f" stroke-width="3.800"/>
</svg>
<div class="t" id="an1" style="left:1228px;top:805px;font-size:19px;font-weight:700;color:#e3191c;letter-spacing:-0.35px;transform:scaleX(0.9671);transform-origin:0 50%">Wrong css rule</div>
<div class="t" id="an2" style="left:1124px;top:994px;font-size:19px;font-weight:700;color:#a2d21e;letter-spacing:-0.239px">Good styles overwritten</div>
<!--ANNOT-->
</body>
</html>
